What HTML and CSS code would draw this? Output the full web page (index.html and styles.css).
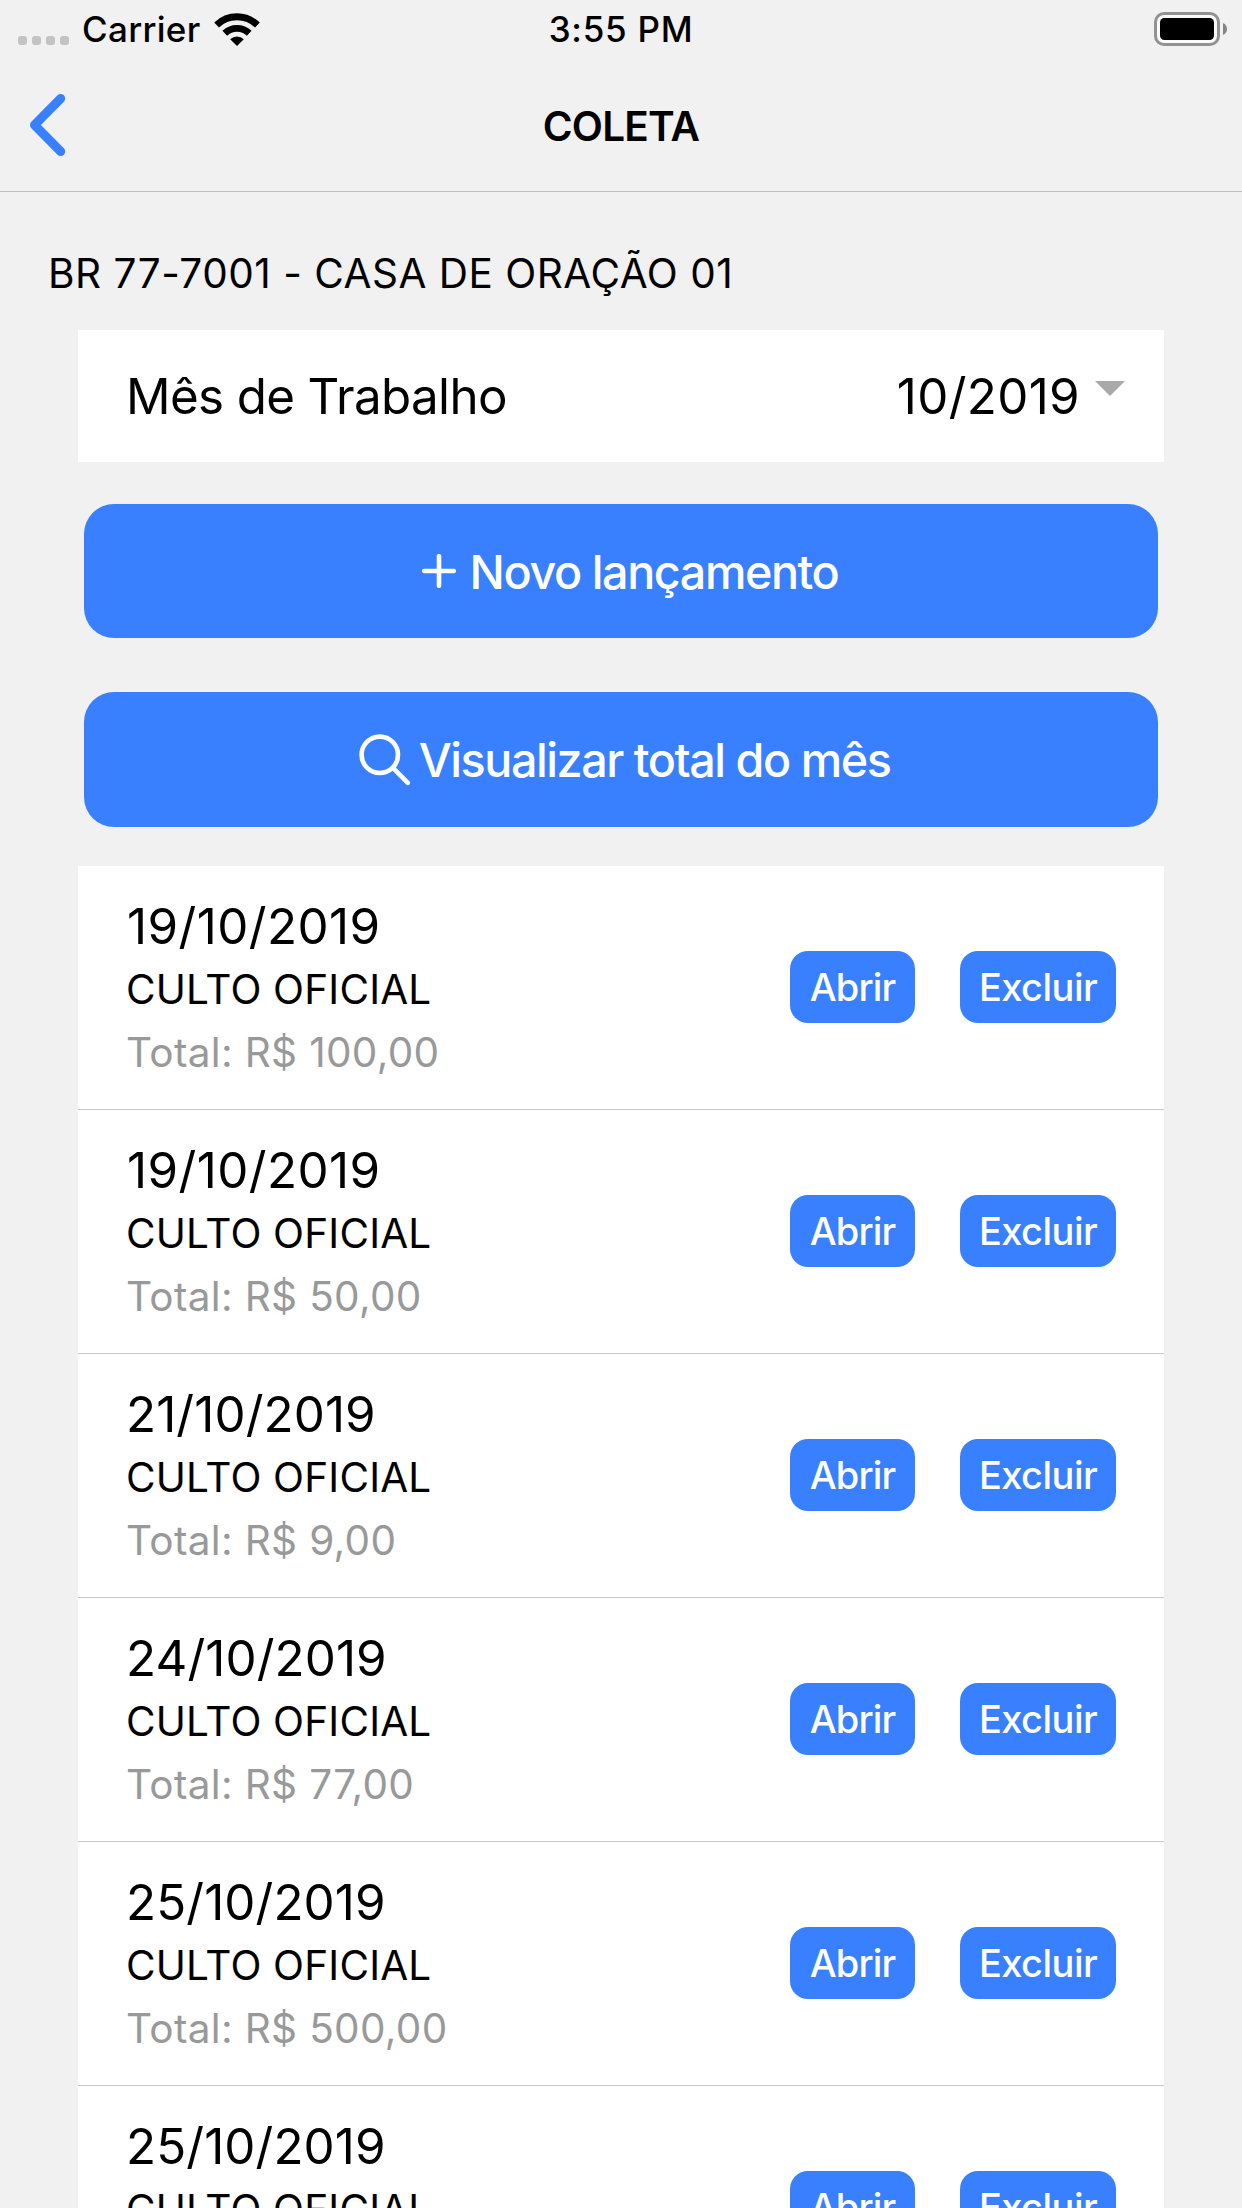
FILE: index.html
```
<!DOCTYPE html>
<html lang="pt-BR">
<head>
<meta charset="utf-8">
<title>Coleta</title>
<link rel="stylesheet" href="styles.css">
</head>
<body>
<header class="header">
  <div class="status">
    <div class="status-left">
      <div class="signal"><i></i><i></i><i></i><i></i></div>
      <span class="carrier">Carrier</span>
      <svg class="wifi" width="46" height="34" viewBox="0 0 46 34">
        <g fill="none" stroke="#000" stroke-width="6.8">
          <path d="M2.6 12A29.4 29.4 0 0 1 43.4 12"/>
          <path d="M10.8 20.3A17.6 17.6 0 0 1 35.2 20.3"/>
        </g>
        <path d="M23 33L16.2 26.2A9.6 9.6 0 0 1 29.8 26.2Z"/>
      </svg>
    </div>
    <span class="clock">3:55 PM</span>
    <svg class="battery" width="74" height="34" viewBox="0 0 74 34">
      <rect x="1.5" y="1.5" width="63" height="31" rx="8.5" fill="#fafafa" stroke="#929292" stroke-width="3"/>
      <rect x="6" y="6" width="54" height="22" rx="4.5"/>
      <path d="M69 11C74.3 12.8 74.3 21.2 69 23Z" fill="#858585"/>
    </svg>
  </div>
  <nav class="nav">
    <svg class="back" width="37" height="64" viewBox="0 0 37 64">
      <path d="M31.7 5.5L5.5 32L31.7 58.5" fill="none" stroke="#3880ff" stroke-width="9" stroke-linecap="round" stroke-linejoin="round"/>
    </svg>
    <h1 class="title">COLETA</h1>
  </nav>
</header>
<main class="page">
  <h2 class="place">BR 77-7001 - CASA DE ORAÇÃO 01</h2>
  <section class="month">
    <span class="month-label">Mês de Trabalho</span>
    <span class="month-value">10/2019</span>
    <svg class="caret" width="30" height="15" viewBox="0 0 30 15"><path d="M0 0H30L15 15Z" fill="#a9a9a9"/></svg>
  </section>
  <div class="actions">
    <button class="action new">
      <svg class="plus" width="34" height="34" viewBox="0 0 34 34"><path d="M17 2.2V31.8M2.2 17H31.8" stroke="#fff" stroke-width="4.6" stroke-linecap="round"/></svg>
      <span class="new-text">Novo lançamento</span>
    </button>
    <button class="action view">
      <svg class="lens" width="52" height="52" viewBox="0 0 52 52" fill="none" stroke="#fff" stroke-linecap="round"><circle cx="20.8" cy="20.8" r="18.2" stroke-width="4.6"/><path d="M34.2 34.2L48.8 48.8" stroke-width="4.6"/></svg>
      <span class="view-text">Visualizar total do mês</span>
    </button>
  </div>
  <ul class="list">
    <li class="row"><div class="info"><span class="date nineteen">19/10/2019</span><span class="kind">CULTO OFICIAL</span><span class="total">Total: R$ 100,00</span></div><button class="small open">Abrir</button><button class="small remove">Excluir</button></li>
    <li class="row"><div class="info"><span class="date nineteen">19/10/2019</span><span class="kind">CULTO OFICIAL</span><span class="total">Total: R$ 50,00</span></div><button class="small open">Abrir</button><button class="small remove">Excluir</button></li>
    <li class="row"><div class="info"><span class="date">21/10/2019</span><span class="kind">CULTO OFICIAL</span><span class="total">Total: R$ 9,00</span></div><button class="small open">Abrir</button><button class="small remove">Excluir</button></li>
    <li class="row"><div class="info"><span class="date">24/10/2019</span><span class="kind">CULTO OFICIAL</span><span class="total">Total: R$ 77,00</span></div><button class="small open">Abrir</button><button class="small remove">Excluir</button></li>
    <li class="row"><div class="info"><span class="date">25/10/2019</span><span class="kind">CULTO OFICIAL</span><span class="total">Total: R$ 500,00</span></div><button class="small open">Abrir</button><button class="small remove">Excluir</button></li>
    <li class="row"><div class="info"><span class="date">25/10/2019</span><span class="kind">CULTO OFICIAL</span></div><button class="small open">Abrir</button><button class="small remove">Excluir</button></li>
  </ul>
</main>
</body>
</html>
```
FILE: styles.css
```
* { box-sizing: border-box; }
html, body { margin: 0; height: 2208px; overflow: hidden; }
body {
  background: #f1f1f1;
  color: #000;
  font-family: Inter, "Liberation Sans", sans-serif;
  white-space: nowrap;
}
svg { display: block; flex: none; }
h1, h2, ul { margin: 0; padding: 0; font-weight: 400; }
button { border: 0; padding: 0; font-family: inherit; color: #fff; background: #3880ff; }

.header { height: 192px; border-bottom: 1px solid #bfbfbf; }
.status {
  display: grid;
  grid-template-columns: 1fr auto 1fr;
  height: 60px;
  padding: 0 14px 0 18px;
  font-size: 35px;
  font-weight: 500;
  line-height: 58px;
}
.status-left { display: flex; }
.signal { display: flex; gap: 5px; padding-top: 36px; }
.signal i { width: 9px; height: 9px; border-radius: 3px; background: #c3c3c3; }
.carrier { width: 145px; padding-left: 13px; letter-spacing: .3px; }
.wifi { margin-top: 13px; }
.clock { margin-right: 4px; letter-spacing: .73px; }
.battery { justify-self: end; margin-top: 12px; }
.nav { display: grid; grid-template-columns: 1fr auto 1fr; height: 131px; padding: 0 28px; }
.back { margin: 33px 0 0 1px; }
.title { font-size: 40.5px; font-weight: 600; letter-spacing: -.78px; line-height: 134px; }

.place { margin-left: 48px; padding-top: 43px; height: 138px; font-size: 40.5px; letter-spacing: .51px; line-height: 77px; }
.month { display: flex; height: 132px; margin: 0 78px; padding: 0 39px 0 48px; background: #fff; font-size: 49.3px; line-height: 132px; }
.month-label { flex: 1; letter-spacing: -.62px; }
.month-value { letter-spacing: .36px; }
.caret { margin: 51px 0 0 15px; }

.actions { display: grid; gap: 54px; margin: 42px 84px 39px; }
.action { display: flex; justify-content: center; border-radius: 30px; font-size: 46.7px; font-weight: 500; line-height: 136px; }
.new { height: 134px; padding-left: 18px; }
.view { height: 135px; padding-left: 7px; }
.plus { margin: 50px 14px 0 0; }
.new-text { letter-spacing: -1.42px; }
.lens { margin: 42px 8px 0 0; }
.view-text { letter-spacing: -1.46px; }

.list { margin: 0 78px; background: #fff; list-style: none; }
.row { display: flex; align-items: flex-start; height: 244px; padding: 0 48px; border-bottom: 1px solid #c8c7cc; }
.info { display: grid; grid-auto-rows: 63px; flex: 1; padding-top: 29px; line-height: 63px; }
.date { font-size: 49.3px; letter-spacing: .12px; }
.nineteen { padding-left: 1px; letter-spacing: .45px; }
.kind { font-size: 40.5px; letter-spacing: .18px; }
.total { font-size: 40.5px; letter-spacing: .34px; color: #999; }
.small { height: 72px; margin-top: 85px; border-radius: 18px; font-size: 38px; font-weight: 500; line-height: 72px; }
.open { width: 125px; letter-spacing: -.87px; }
.remove { width: 156px; margin-left: 45px; letter-spacing: -.53px; }
```
